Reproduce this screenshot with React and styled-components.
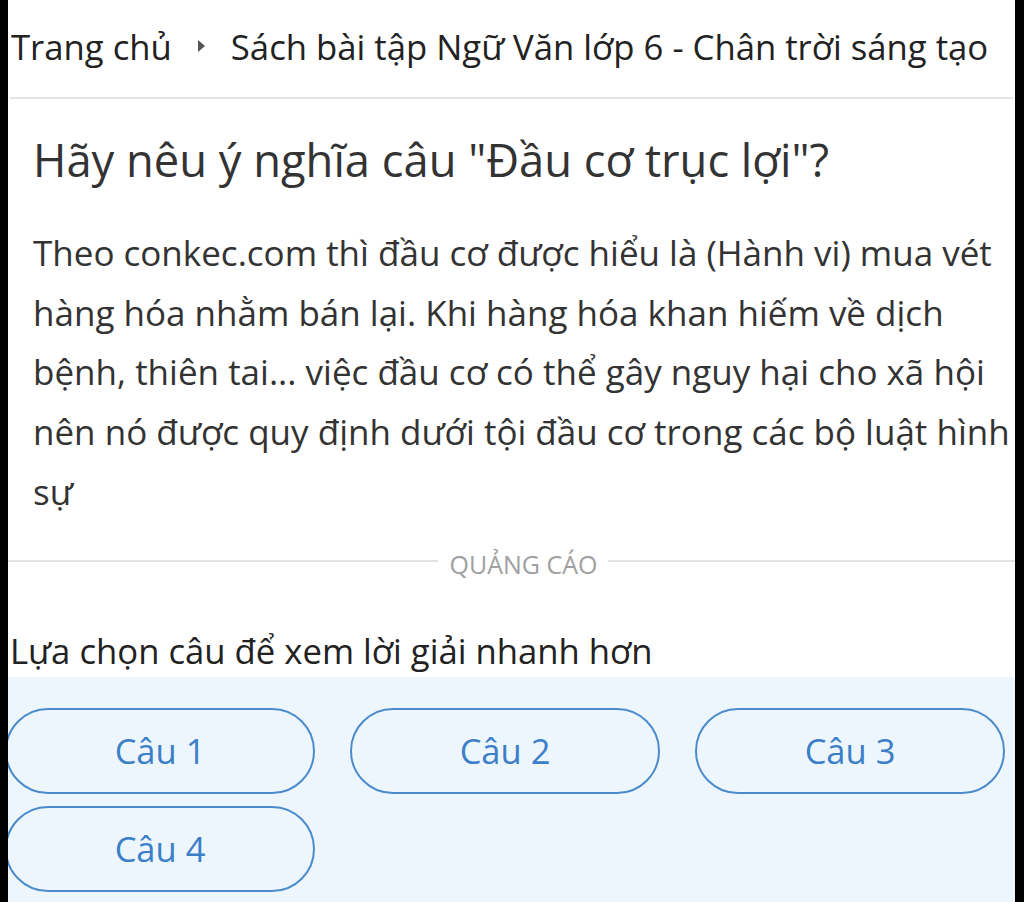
import React from "react";
import styled, { createGlobalStyle } from "styled-components";

const Global = createGlobalStyle`
  html, body { margin: 0; padding: 0; background: #000; }
  body { font-family: "Open Sans", "Noto Sans", sans-serif; }
  * { box-sizing: border-box; }
`;

const Page = styled.div`
  margin-left: 8px;
  width: 1007px;
  min-height: 902px;
  background: #fff;
  overflow: hidden;
  display: flex;
  flex-direction: column;
`;

const Breadcrumb = styled.nav`
  display: flex;
  align-items: center;
  gap: 26px;
  padding: 22px 0 25px 3px;
  font-size: 34.7px;
  line-height: 50px;
  font-weight: 500;
  color: #222;
  white-space: nowrap;
`;

const Crumb = styled.span``;

const Arrow = styled.span`
  width: 0;
  height: 0;
  border-top: 6px solid transparent;
  border-bottom: 6px solid transparent;
  border-left: 7px solid #555;
  margin-top: -3px;
`;

const Rule = styled.hr`
  margin: 0 2px;
  border: 0;
  height: 2px;
  background: #e4e4e4;
`;

const Article = styled.article`
  padding: 0 0 0 25px;
`;

const Title = styled.h1`
  margin: 31px 0 0;
  font-size: 45.3px;
  line-height: 60px;
  font-weight: 500;
  color: #333;
`;

const Body = styled.p`
  margin: 33px 0 0;
  font-size: 35px;
  line-height: 59.7px;
  font-weight: 500;
  color: #333;
`;

const AdDivider = styled.div`
  display: flex;
  align-items: center;
  gap: 11px;
  margin-top: 25px;
  height: 34px;
  color: #a0a0a0;
  font-size: 25px;
  line-height: 34px;
  &::before, &::after {
    content: "";
    height: 2px;
    background: #e2e2e2;
    margin-top: -6px;
  }
  &::before { flex: 432; }
  &::after { flex: 408; }
`;

const Prompt = styled.div`
  margin-top: 45px;
  padding-left: 2px;
  font-size: 34.7px;
  line-height: 50px;
  font-weight: 500;
  color: #222;
`;

const Choices = styled.section`
  flex: 1;
  margin-top: 1px;
  background: #eef6fd;
  padding: 31px 0 12px 0;
`;

const Grid = styled.div`
  display: grid;
  grid-template-columns: repeat(3, 310px);
  column-gap: 35px;
  row-gap: 12px;
  margin-left: -3px;
`;

const ChoiceButton = styled.button`
  height: 86px;
  border: 2.5px solid #4b8bcc;
  border-radius: 43px;
  background: transparent;
  color: #3a7fc8;
  font-family: "Open Sans", "Noto Sans", sans-serif;
  font-size: 34.5px;
  font-weight: 500;
  padding: 0;
  cursor: pointer;
`;

const choices = ["Câu 1", "Câu 2", "Câu 3", "Câu 4"];

export default function App() {
  return (
    <>
      <Global />
      <Page>
        <Breadcrumb>
          <Crumb>Trang chủ</Crumb>
          <Arrow />
          <Crumb>Sách bài tập Ngữ Văn lớp 6 - Chân trời sáng tạo</Crumb>
        </Breadcrumb>
        <Rule />
        <Article>
          <Title>Hãy nêu ý nghĩa câu "Đầu cơ trục lợi"?</Title>
          <Body>
            Theo conkec.com thì đầu cơ được hiểu là (Hành vi) mua vét hàng hóa
            nhằm bán lại. Khi hàng hóa khan hiếm về dịch bệnh, thiên tai... việc
            đầu cơ có thể gây nguy hại cho xã hội nên nó được quy định dưới tội
            đầu cơ trong các bộ luật hình sự
          </Body>
        </Article>
        <AdDivider>QUẢNG CÁO</AdDivider>
        <Prompt>Lựa chọn câu để xem lời giải nhanh hơn</Prompt>
        <Choices>
          <Grid>
            {choices.map((c) => (
              <ChoiceButton key={c}>{c}</ChoiceButton>
            ))}
          </Grid>
        </Choices>
      </Page>
    </>
  );
}
